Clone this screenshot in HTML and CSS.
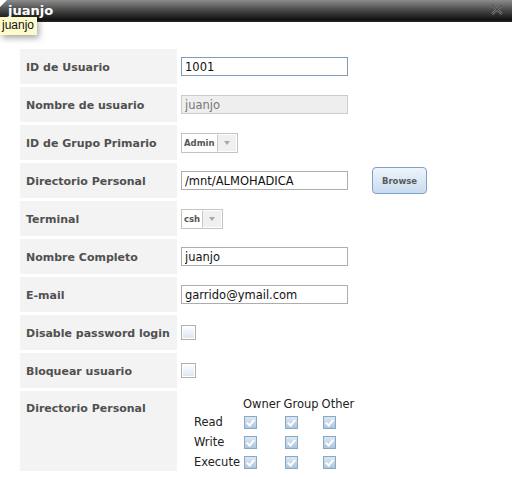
FILE: index.html
```html
<!DOCTYPE html>
<html lang="es">
<head>
<meta charset="UTF-8">
<title>juanjo</title>
<link rel="stylesheet" href="styles.css">
</head>
<body>

<div class="dialog">
    <!-- Title bar -->
    <div class="titlebar">
        <span class="corner"></span>
        <span class="title">juanjo</span>
        <span class="close">
            <svg width="14" height="11" viewBox="0 0 14 11">
                <path d="M2 1 L12 10 M12 1 L2 10" stroke="#767676" stroke-width="2.6" fill="none"/>
                <path d="M2 1 L12 10 M12 1 L2 10" stroke="#3a3a3a" stroke-width="1" fill="none"/>
            </svg>
        </span>
    </div>
    <div class="tooltip">juanjo</div>

    <form class="user-form">
        <div class="label">ID de Usuario</div>
        <div class="value"><input type="text" class="text focused" value="1001"></div>

        <div class="label">Nombre de usuario</div>
        <div class="value"><input type="text" class="text" value="juanjo" disabled></div>

        <div class="label">ID de Grupo Primario</div>
        <div class="value">
            <span class="select"><span class="select-text">Admin</span><span class="arrow"></span></span>
        </div>

        <div class="label">Directorio Personal</div>
        <div class="value">
            <input type="text" class="text" value="/mnt/ALMOHADICA">
            <button type="button" class="browse">Browse</button>
        </div>

        <div class="label">Terminal</div>
        <div class="value">
            <span class="select"><span class="select-text">csh</span><span class="arrow"></span></span>
        </div>

        <div class="label">Nombre Completo</div>
        <div class="value"><input type="text" class="text" value="juanjo"></div>

        <div class="label">E-mail</div>
        <div class="value"><input type="text" class="text" value="garrido@ymail.com"></div>

        <div class="label">Disable password login</div>
        <div class="value"><span class="check"></span></div>

        <div class="label">Bloquear usuario</div>
        <div class="value"><span class="check"></span></div>

        <div class="label top">Directorio Personal</div>
        <div class="value perms-cell">
            <table class="perms">
                <tr><th></th><th>Owner</th><th>Group</th><th>Other</th></tr>
                <tr><td>Read</td><td><span class="tick"></span></td><td><span class="tick"></span></td><td><span class="tick"></span></td></tr>
                <tr><td>Write</td><td><span class="tick"></span></td><td><span class="tick"></span></td><td><span class="tick"></span></td></tr>
                <tr><td>Execute</td><td><span class="tick"></span></td><td><span class="tick"></span></td><td><span class="tick"></span></td></tr>
            </table>
        </div>
    </form>
</div>

</body>
</html>
```

FILE: styles.css
```css
body {
    margin: 0;
    background: #ffffff;
    font-family: "DejaVu Sans", Verdana, sans-serif;
}

.dialog {
    position: relative;
    width: 512px;
    height: 477px;
    overflow: hidden;
}

/* Title bar */
.titlebar {
    position: relative;
    height: 22px;
    background: linear-gradient(#8c8c8c, #4a4a4a 45%, #111111 90%, #2a2a2a);
    display: flex;
    align-items: center;
}

.title {
    color: #ffffff;
    font-weight: bold;
    font-size: 13px;
    margin-left: 8px;
    margin-top: -1px;
}

.corner {
    position: absolute;
    left: 0;
    top: 0;
    width: 0;
    height: 0;
    border-top: 7px solid #ffffff;
    border-right: 7px solid transparent;
}

.close {
    position: absolute;
    right: 8px;
    top: 4px;
    line-height: 0;
}

.tooltip {
    position: absolute;
    left: 0;
    top: 17px;
    padding: 1px 3px 2px 2px;
    background: #fdfbcb;
    color: #111111;
    font-family: "Liberation Sans", Arial, sans-serif;
    font-size: 12px;
    line-height: 15px;
    box-shadow: 2px 3px 6px rgba(0, 0, 0, 0.35);
}

/* Form grid */
.user-form {
    display: grid;
    grid-template-columns: 157px 1fr;
    grid-auto-rows: 35px;
    row-gap: 3px;
    margin: 27px 0 0 20px;
}

.label {
    background: #f3f3f3;
    color: #505050;
    font-weight: bold;
    font-size: 11px;
    padding: 2px 0 0 6px;
    box-sizing: border-box;
    display: flex;
    align-items: center;
}

.label.top {
    align-items: flex-start;
    padding-top: 11px;
    grid-row: span 2;
    height: 80px;
}

.value {
    display: flex;
    align-items: center;
    padding-left: 4px;
}

.text {
    width: 167px;
    height: 19px;
    box-sizing: border-box;
    border: 1px solid #adadad;
    padding: 1px 3px;
    font-family: "DejaVu Sans", Verdana, sans-serif;
    font-size: 11.5px;
    color: #111111;
    background: #ffffff;
}

.text.focused {
    border-color: #7f9db9;
}

.text:disabled {
    background: #eeeeee;
    color: #777777;
    border-color: #cccccc;
}

.browse {
    margin-left: 24px;
    width: 55px;
    height: 27px;
    border: 1px solid #7fa2c4;
    border-radius: 4px;
    background: linear-gradient(#eef4fb, #c9dcef);
    color: #5a5a5a;
    font-family: "DejaVu Sans", Verdana, sans-serif;
    font-weight: bold;
    font-size: 8.5px;
    padding: 0;
}

/* Fake select */
.select {
    display: inline-flex;
    height: 20px;
    box-sizing: border-box;
    border: 1px solid #c4c4c4;
    background: #ffffff;
}

.select-text {
    font-size: 8.5px;
    font-weight: bold;
    color: #555555;
    padding: 0 2px 0 2px;
    display: flex;
    align-items: center;
}

.arrow {
    position: relative;
    width: 18px;
    border: 1px solid #ffffff;
    border-left: 1px solid #c8c8c8;
    background: #f0f0f0;
}

.arrow::after {
    content: "";
    position: absolute;
    left: 6px;
    top: 6px;
    border-top: 4px solid #a0a8b8;
    border-left: 3px solid transparent;
    border-right: 3px solid transparent;
}

/* Checkboxes */
.check {
    width: 15px;
    height: 15px;
    box-sizing: border-box;
    border: 1px solid #b0b0b0;
    background: linear-gradient(#ffffff, #dbe5ef);
    box-shadow: inset 0 0 0 1px #ffffff;
}

.perms-cell {
    grid-row: span 2;
    height: 80px;
    align-items: flex-start;
    padding-left: 17px;
}

.perms {
    border-collapse: collapse;
    font-size: 11.5px;
    color: #222222;
    margin-top: 4px;
}

.perms th {
    font-weight: normal;
    text-align: left;
    padding: 0 3px 0 0;
    height: 17px;
}

.perms td {
    height: 20px;
    padding: 0 3px 0 0;
    vertical-align: middle;
}

.tick {
    display: block;
    width: 13px;
    height: 13px;
    margin-left: 1px;
    box-sizing: border-box;
    border: 1px solid #8aa7c4;
    background-color: #c5d8ea;
    background-image: linear-gradient(#dbe8f4, #aec6de);
    position: relative;
}

.tick::after {
    content: "";
    position: absolute;
    left: 3px;
    top: 1px;
    width: 3px;
    height: 6px;
    border-right: 2px solid #ffffff;
    border-bottom: 2px solid #ffffff;
    transform: rotate(40deg);
}
```
